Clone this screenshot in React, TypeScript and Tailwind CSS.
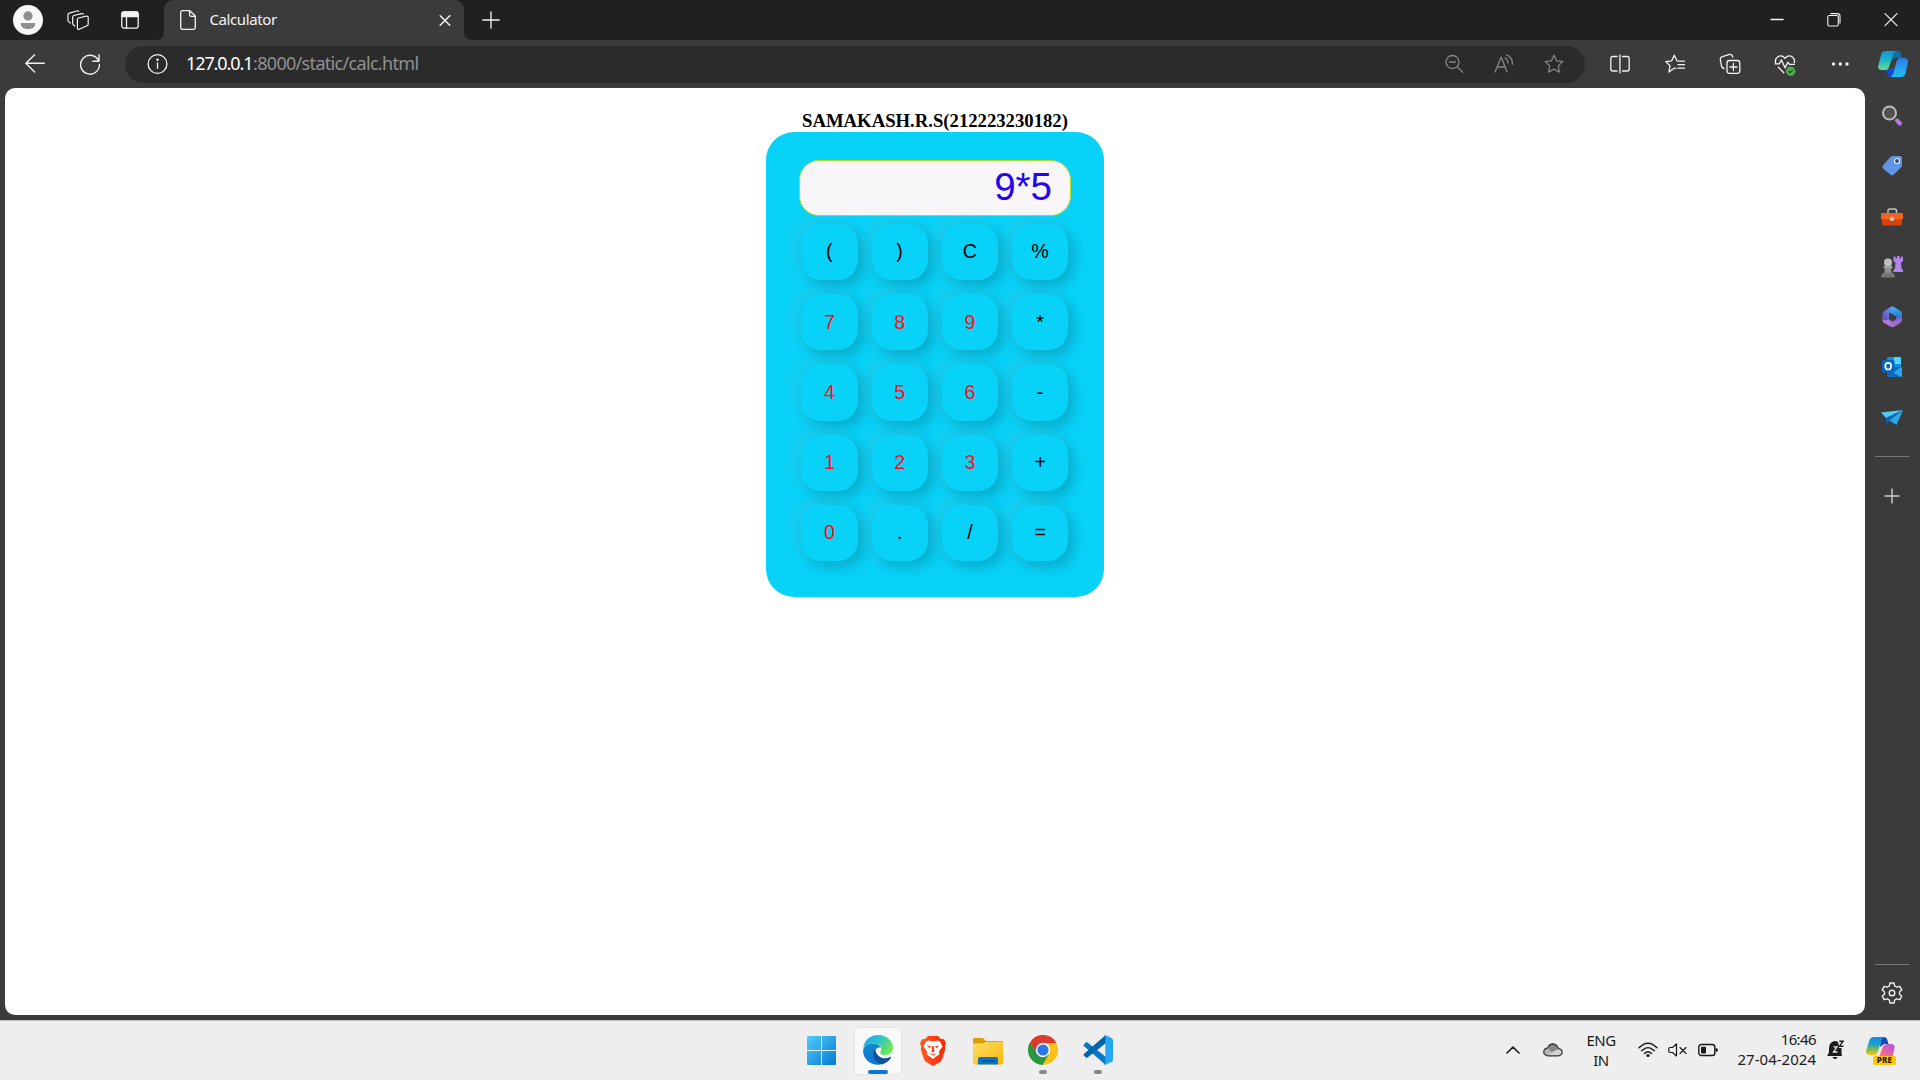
import React from 'react';

type CellProps = { w: string; children?: React.ReactNode };

const Cell = ({ w, children }: CellProps) => (
  <div className={`flex h-full shrink-0 items-center justify-center ${w}`}>{children}</div>
);

type LineProps = {
  w?: number;
  h?: number;
  sw?: number;
  color?: string;
  className?: string;
  children: React.ReactNode;
};

const Line = ({ w = 20, h = 20, sw = 1.3, color = '#f2f2f2', className = '', children }: LineProps) => (
  <svg
    width={w}
    height={h}
    viewBox={`0 0 ${w} ${h}`}
    fill="none"
    stroke={color}
    strokeWidth={sw}
    strokeLinecap="round"
    strokeLinejoin="round"
    className={`shrink-0 ${className}`}
  >
    {children}
  </svg>
);

function TitleBar() {
  return (
    <div className="flex h-10 items-center bg-[#202020]">
      <Cell w="w-[56px]">
        <svg width="30" height="30" viewBox="0 0 30 30">
          <circle cx="15" cy="15" r="15" fill="#f8f8f8" />
          <circle cx="15" cy="10.9" r="4.6" fill="#8f8f8f" />
          <path d="M8 18h14v1.5c0 3-3 4.5-7 4.5s-7-1.5-7-4.5Z" fill="#8f8f8f" />
        </svg>
      </Cell>
      <Cell w="w-[43px]">
        <Line w={22} h={22} sw={1.2}>
          <path d="M11.300 9 19.500 7.200q1.700-.3 1.700 1.300v6.500q0 1.300-1.200 1.800l-7.700 3.500q-1.700.6-1.900-1.100V10.500q0-1.200.9-1.500Z" />
          <path d="M7.800 17 6.300 15.800q-.6-.5-.6-1.300V8q0-1.200 1.200-1.500L14.500 4.600q1.200-.3 1.800.4" />
          <path d="M3.300 14 1.600 12.600Q1 12 1 11.200V5.600q0-1.200 1.200-1.500L9.800 2q1.200-.3 1.800.4" />
        </Line>
      </Cell>
      <Cell w="w-[57px]">
        <Line w={18} h={18} sw={1.3} className="ml-[5px]">
          <rect x=".8" y=".8" width="16.400" height="16.400" rx="2.500" />
          <path d="M1 2.500Q1 1 3 1h12q2 0 2 1.500V5.500H1Z" fill="#f2f2f2" />
          <path d="M5.500 6v11" />
        </Line>
      </Cell>
      <div className="flex h-10 w-[316px] items-end">
        <svg width="8" height="8" viewBox="0 0 8 8">
          <path d="M8 0v8H0Q8 8 8 0Z" fill="#3b3b3b" />
        </svg>
        <div className="flex h-10 w-[300px] items-center rounded-t-[9px] bg-[#3b3b3b] pr-[13px] pl-4">
          <Line w={16} h={20}>
            <path d="M2.500.7h7.300L15.300 6v11.500q0 1.800-1.800 1.800H2.500Q.7 19.300.7 17.500v-15Q.7.7 2.500.7ZM9.600.9v3.800q0 1.600 1.600 1.600h4" />
          </Line>
          <span className="ml-[13.500px] grow pb-[2px] text-[15px] tracking-[-0.400px] text-[#f5f5f5]">Calculator</span>
          <Line w={12} h={12} sw={1.5}>
            <path d="m1.200 1.700 9.600 9.600m0-9.600-9.600 9.600" />
          </Line>
        </div>
        <svg width="8" height="8" viewBox="0 0 8 8">
          <path d="M0 0v8h8Q0 8 0 0Z" fill="#3b3b3b" />
        </svg>
      </div>
      <Cell w="w-[37px]">
        <Line w={18} h={18}>
          <path d="M9 .8v16.400M.8 9h16.400" />
        </Line>
      </Cell>
      <div className="grow" />
      <Cell w="w-[57px]">
        <Line w={14} h={14}>
          <path d="M1 6.500h12" />
        </Line>
      </Cell>
      <Cell w="w-[57px]">
        <Line w={14} h={14} sw={1.1}>
          <rect x=".8" y="2.500" width="10.500" height="10.500" rx="1.500" />
          <path d="M3.800.6h6.500Q13 .6 13 3.300V10" />
        </Line>
      </Cell>
      <Cell w="w-[58px]">
        <Line w={14} h={14} sw={1.2}>
          <path d="m1 .6 12 12M13 .6l-12 12" />
        </Line>
      </Cell>
    </div>
  );
}

const STAR =
  'M10 1.200 12.600 6.800l6.200.8-4.500 4.300 1.100 6.200L10 15.100l-5.400 3 1.100-6.200L1.200 7.600l6.200-.8Z';

function Toolbar() {
  return (
    <div className="flex h-12 items-center bg-[#3b3b3b] pb-1 pt-1">
      <Cell w="w-[70px]">
        <Line w={20} h={20} sw={1.4}>
          <path d="M19.300 9.300H1M9.600.8.900 9.300l8.700 8.600" />
        </Line>
      </Cell>
      <Cell w="w-[40px]">
        <Line w={22} h={22} sw={1.4}>
          <path d="M19.800 8.400A9.400 9.400 0 1 0 20.400 11.500M20 1.800v6.500h-6.200" />
        </Line>
      </Cell>
      <div className="ml-[15px] flex h-[37px] w-[1460px] shrink-0 items-center rounded-full bg-[#2b2b2b]">
        <Cell w="w-[63px]">
          <Line w={22} h={22}>
            <circle cx="11.500" cy="11" r="9.400" />
            <path d="M11.500 9.800v5.500" />
            <circle cx="11.500" cy="6.800" r=".6" fill="#f2f2f2" />
          </Line>
        </Cell>
        <div className="-ml-[2px] flex grow pb-[3px] text-[18px] leading-6">
          <span className="w-[67px] tracking-[-1.100px] text-white">127.0.0.1</span>
          <span className="tracking-[-0.680px] text-[#919191]">:8000/static/calc.html</span>
        </div>
        <Cell w="w-[51px]">
          <Line w={20} h={20} color="#858585">
            <circle cx="8.500" cy="8" r="6.500" />
            <path d="m13.200 12.800 5.500 5.400M5.500 8h6" />
          </Line>
        </Cell>
        <Cell w="w-[50px]">
          <Line w={20} h={20} color="#858585">
            <path d="M1 18 7.200 3 13 18M3 13h8.300M11 4q3 1.500 3 5M12.500.8Q18.500 3 18.500 10.200" />
          </Line>
        </Cell>
        <Cell w="w-[50px]">
          <Line color="#858585">
            <path d={STAR} />
          </Line>
        </Cell>
        <div className="w-[6px]" />
      </div>
      <Cell w="w-[69px]">
        <Line>
          <path d="M7 2.500H2.800q-2 0-2 2v10.500q0 2 2 2H7M12.500 2.500h4.700q2 0 2 2v10.500q0 2-2 2h-4.700M9.900.8v18" />
        </Line>
      </Cell>
      <Cell w="w-[42px]">
        <Line>
          <path d="M11 14.500 9.500 14 4 18l1-6.200L.8 7.600l5.900-.8L9.300 1.200 12 6.800M13 7.200h6.500M13 10.700h6.500M13 14.200h6.500" />
        </Line>
      </Cell>
      <Cell w="w-[68px]">
        <Line w={22} h={22}>
          <rect x="8" y="7.500" width="12.800" height="12.800" rx="2.500" />
          <path d="M14.400 10.500v7m-3.500-3.500h7M5 15.500q-2-.5-2.500-2.500L1.300 6.500q-.3-2 1.500-2.700L10.500 1.400q2.600-.4 3.300 2.600" />
        </Line>
      </Cell>
      <Cell w="w-[42px]">
        <Line w={22} h={22} className="mt-1">
          <path d="M1.600 8Q.8 4 3.500 2q4-2.600 7.500 1.200Q14.500-.6 18.400 2q2.600 2 1.900 5.500M1.200 8.900h4l2.300-4 3.600 8 2.800-5.800 1.500 2.200h5M4.300 12.200l5.500 5.600" />
          <circle cx="16.700" cy="16.300" r="4.700" fill="#4caf50" stroke="none" />
          <path d="m14.700 16.500 1.300 1.300 2.600-2.700" stroke="#24562a" />
        </Line>
      </Cell>
      <Cell w="w-[68px]">
        <svg width="18" height="6" viewBox="0 0 18 6" fill="#f2f2f2">
          <circle cx="2.500" cy="3" r="1.700" />
          <circle cx="9.300" cy="3" r="1.700" />
          <circle cx="16" cy="3" r="1.700" />
        </svg>
      </Cell>
      <Cell w="w-[38px]">
        <svg width="30" height="28" viewBox="0 0 30 28">
          <defs>
            <linearGradient id="cpA" x1="0" y1="0" x2="0" y2="1">
              <stop offset="0" stopColor="#1295d8" />
              <stop offset=".5" stopColor="#20b5c4" />
              <stop offset="1" stopColor="#65dd8c" />
            </linearGradient>
            <linearGradient id="cpB" x1="0" y1="0" x2="0" y2="1">
              <stop offset="0" stopColor="#2c7be5" />
              <stop offset="1" stopColor="#1fc0f5" />
            </linearGradient>
          </defs>
          <path d="M16 1h4q2 0 2.500 2l1.500 5h-6l-5 2Z" fill="#0f6fa8" />
          <path d="M7 19h7l2-4v12h-4q-2 0-3-3Z" fill="#1648d8" />
          <path d="M7.500 1H18q-2 .8-2.700 3l-4.200 13q-.7 3-3.600 3H4Q-.7 20 .3 15.500L3.300 4.300Q4.300 1 7.500 1Z" fill="url(#cpA)" />
          <path d="M22 8h4q4.500 0 4 4.500l-2.500 11q-1 3.500-4.500 3.500H12q2.500-.5 3.300-3.500l3.500-12.800Q19.500 8 22 8Z" fill="url(#cpB)" />
        </svg>
      </Cell>
    </div>
  );
}

const KEYS = ['(', ')', 'C', '%', '7', '8', '9', '*', '4', '5', '6', '-', '1', '2', '3', '+', '0', '.', '/', '='];

function Calculator() {
  return (
    <main className="flex w-[1860px] flex-col items-center rounded-[10px] bg-white pt-[22px]">
      <h1 className="font-['Liberation_Serif',serif] text-[18.700px] leading-[22px] font-bold text-black">
        SAMAKASH.R.S(212223230182)
      </h1>
      <section className="flex h-[465px] w-[338px] flex-col items-center rounded-[28px] bg-[#09d2f8] pt-7 font-['Liberation_Sans',sans-serif]">
        <div className="flex h-14 w-[272px] items-center justify-end rounded-[20px] border border-[#b2dc1e] bg-[#f8f6f8] pr-[18px] pb-[2px] text-[38.500px] text-[#2404f0]">
          9*5
        </div>
        <div className="mt-2 mr-[0.500px] grid grid-cols-4 gap-[14px]">
          {KEYS.map((k) => (
            <button
              key={k}
              className={`flex h-[56.200px] w-[56.250px] items-center justify-center rounded-[20px] bg-[#09d2f8] text-[19.700px] shadow-[6px_6px_14px_rgba(0,0,0,0.18),-6px_-4px_16px_rgba(110,170,180,0.200)] ${/\d/.test(k) ? 'text-[#ff0c14]' : 'text-black'}`}
            >
              {k}
            </button>
          ))}
        </div>
      </section>
    </main>
  );
}

const SideCell = ({ children }: { children: React.ReactNode }) => (
  <div className="flex h-[50.250px] w-full shrink-0 items-center justify-center">{children}</div>
);

function Sidebar() {
  return (
    <aside className="flex w-[54px] flex-col items-center bg-[#3b3b3b] pt-[3px]">
      <SideCell>
        <svg width="22" height="22" viewBox="0 0 22 22">
          <circle cx="8.500" cy="8" r="6.500" fill="#505050" stroke="#bcbcbc" strokeWidth="2" />
          <path d="m16 15.500 3 3" stroke="#b57ce8" strokeWidth="4" strokeLinecap="round" />
        </svg>
      </SideCell>
      <SideCell>
        <svg width="22" height="22" viewBox="0 0 22 22">
          <path d="M12 1h7q2 0 2 2v7q0 1.500-1 2.500l-7.500 7.300q-1.500 1.400-3 0L2 13.500Q.6 12 2 10.500L9.500 2q1-1 2.500-1Z" fill="#6095e6" />
          <circle cx="16" cy="6" r="2.500" fill="#26456f" stroke="#e8f0ff" strokeWidth="1.200" />
        </svg>
      </SideCell>
      <SideCell>
        <svg width="22" height="20" viewBox="0 0 22 20">
          <path d="M7 7V4q0-2 2-2h4.500q2 0 2 2v3" fill="none" stroke="#c4c4c4" strokeWidth="1.500" />
          <rect x="1" y="11" width="20" height="7.500" rx="1" fill="#d6410c" />
          <path d="M0 7q0-1 1-1h20q1 0 1 1v4.500q0 1-1 1H1q-1 0-1-1Z" fill="#f26322" />
          <circle cx="11" cy="12" r="2.200" fill="#c9c4c0" />
        </svg>
      </SideCell>
      <SideCell>
        <svg width="22" height="24" viewBox="0 0 22 24">
          <path d="M12.500 1.500h2v1.800h1.500V1h2.600v2.300H20V1.500h2v4.800l-2 1.200.5 6 1.500 1.300V17h-9.500v-2.200l1.500-1.300.5-6-2-1.200Z" fill="#b385ec" />
          <path d="M4 13h6l.8 5.500H3.200Z" fill="#8e8e8e" />
          <circle cx="7" cy="7.500" r="4" fill="#c0c0c0" />
          <rect x="2.500" y="11" width="9" height="2.500" rx="1.200" fill="#a2a2a2" />
          <path d="M2 18h10q2 1 2 4.500H0Q0 19 2 18Z" fill="#777" />
        </svg>
      </SideCell>
      <SideCell>
        <svg width="22" height="22" viewBox="0 0 22 22">
          <defs>
            <linearGradient id="mA" x1="0" y1="1" x2="1" y2="0">
              <stop offset="0" stopColor="#5145b8" />
              <stop offset="1" stopColor="#8a9af0" />
            </linearGradient>
            <linearGradient id="mB" x1="0" y1="0" x2="0" y2="1">
              <stop offset="0" stopColor="#42b8f2" />
              <stop offset="1" stopColor="#2563c7" />
            </linearGradient>
            <linearGradient id="mC" x1="0" y1="0" x2="1" y2="0">
              <stop offset="0" stopColor="#bd82dd" />
              <stop offset="1" stopColor="#8a62c9" />
            </linearGradient>
          </defs>
          <path d="M11.500.5 13 .8 10.500 4Q8 5.500 8 8.500v5L5.500 16q-4-.5-4-3.500V7.800q0-2 1.700-3L9.500 1Z" fill="url(#mA)" />
          <path d="M11 .5q1.200 0 2.400.7L19.500 5q1.500.9 1.500 2.800v6l-5.500.2-.5-3.500L8.500 6.500q0-3.500 2.500-6Z" fill="url(#mB)" />
          <path d="M1.500 12.500q1.500 2.500 4.500 1.800l2-1 3.500 2.500L17 12l4-.5v2.700q0 1.800-1.500 2.700l-6 3.700q-2 1.200-4 0l-6.200-3.700q-1.800-1.100-1.800-3Z" fill="url(#mC)" />
        </svg>
      </SideCell>
      <SideCell>
        <svg width="22" height="22" viewBox="0 0 22 22">
          <rect x="6" y="1" width="14" height="18" rx="1.500" fill="#1490df" />
          <path d="M13 1h5.500Q20 1 20 2.500V8h-7Z" fill="#50d9ff" />
          <path d="M6 11h15v8.500q0 1.500-1.500 1.500H7.500Q6 21 6 19.500Z" fill="#126abd" />
          <path d="m21 11-9 5.500 8 4.500q1-.3 1-1.500Z" fill="#28a8ea" />
          <rect x="1" y="4" width="12.500" height="12.500" rx="1.500" fill="#0865c1" />
          <ellipse cx="7.200" cy="10.200" rx="2.900" ry="3.300" fill="none" stroke="#fff" strokeWidth="1.700" />
        </svg>
      </SideCell>
      <SideCell>
        <svg width="22" height="18" viewBox="0 0 22 18">
          <path d="M22 1 0 3.500l5 5.500Z" fill="#50cdf5" />
          <path d="M22 1 5 9v6l4-3.300Z" fill="#0d66b5" />
          <path d="M22 1 8.500 11.500 15.500 16Z" fill="#29a8ec" />
        </svg>
      </SideCell>
      <div className="mt-[13.250px] h-px w-[35px] shrink-0 bg-[#747474]" />
      <div className="mt-[14px] w-full">
        <SideCell>
          <Line w={16} h={16} color="#d0d0d0" sw={1.4}>
            <path d="M8 1v14M1 8h14" />
          </Line>
        </SideCell>
      </div>
      <div className="grow" />
      <div className="h-px w-[35px] shrink-0 bg-[#747474]" />
      <div className="flex h-[55px] items-center">
        <Line w={22} h={22} sw={1.400} color="#eeeeee">
          <circle cx="11" cy="11" r="2.800" />
          <path d="M9 1h4l.7 3 2 1.200 3.100-.9 2 3.500-2.300 2.100v2.200l2.300 2.100-2 3.500-3.100-.9-2 1.200L13 21H9l-.7-3-2-1.200-3.100.9-2-3.500 2.300-2.100V9.900L1.200 7.800l2-3.500 3.100.9 2-1.200Z" />
        </Line>
      </div>
    </aside>
  );
}

function EdgeIcon() {
  return (
    <svg width="30" height="30" viewBox="0 0 30 30">
      <defs>
        <linearGradient id="edA" x1="0" y1="0" x2="1" y2=".5">
          <stop offset="0" stopColor="#1b9de2" />
          <stop offset=".5" stopColor="#2bc3d2" />
          <stop offset="1" stopColor="#6de756" />
        </linearGradient>
        <linearGradient id="edB" x1="0" y1="0" x2="0" y2="1">
          <stop offset="0" stopColor="#1688c9" />
          <stop offset="1" stopColor="#0878d4" />
        </linearGradient>
      </defs>
      <path d="M.3 13.500C1 5.500 7 0 15 0c8.500 0 15 5.700 15 12.500 0 4.300-3.500 7.500-8 7.500-4 0-5.500-1.500-4.500-3.200C20 13 17 9 11 8.500 6.500 8 2 9.500.3 13.500Z" fill="url(#edA)" />
      <path d="M.1 15.500C.5 11 5 8.300 10 8.500c3.500.1 6.500 1.500 7.700 4-3.400-.6-6.200 2-6.200 6 0 5 4 9.500 8.500 10.500-9.500 3-20-3.500-19.900-13.500Z" fill="url(#edB)" />
      <path d="M12.200 14.200C8 18.500 10.500 28 19.500 29.200c4-1.200 7-3.800 8.400-6.500.3-.7-.2-1.100-.9-.7-6 3-13.500.5-14.800-7.800Z" fill="#104f9b" />
    </svg>
  );
}

function VsCodeIcon() {
  return (
    <svg width="30" height="30" viewBox="0 0 30 30">
      <path d="m1 9.200 2-1.700q.7-.5 1.500 0L23 22v7.500q-1.300-.1-2-.9L.8 11Q0 10 1 9.200Z" fill="#0879c5" />
      <path d="m1 20.800 2 1.700q.7.500 1.500 0L23 8V.5q-1.300.1-2 .9L.8 19q-.8 1 .2 1.800Z" fill="#0065a9" />
      <path d="M22.500.2 28.600 3q1.400.8 1.400 2.200v19.600q0 1.400-1.400 2.200l-6.100 2.800q-.9.300-1.700-.4 1.500.4 1.500-1.200V1.800Q22.300.2 20.800.6q.8-.7 1.700-.4Z" fill="#26a7f2" />
    </svg>
  );
}

function Taskbar() {
  return (
    <footer className="flex h-[60px] items-center border-t border-[#bcbcbc] bg-[#eeeeee] text-[#1b1b1b]">
      <div className="w-[794px]" />
      <Cell w="w-[55px]">
        <svg width="29" height="29" viewBox="0 0 29 29">
          <defs>
            <linearGradient id="win" x1="0" y1="0" x2="1" y2="1">
              <stop offset="0" stopColor="#50cdfb" />
              <stop offset="1" stopColor="#0878d4" />
            </linearGradient>
          </defs>
          <path d="M1 0h13v14H0V1q0-1 1-1Zm14 0h13q1 0 1 1v13H15ZM0 15h14v14H1q-1 0-1-1Zm15 0h14v13q0 1-1 1H15Z" fill="url(#win)" />
        </svg>
      </Cell>
      <Cell w="w-[57px]">
        <div className="flex h-12 w-12 flex-col items-center justify-end rounded-[5px] border border-[#e4e4e4] bg-[#f9f9f9]">
          <EdgeIcon />
          <div className="mt-[5px] h-1 w-5 rounded-full bg-[#0a78d1]" />
        </div>
      </Cell>
      <Cell w="w-[54px]">
        <svg width="26" height="30" viewBox="0 0 26 30">
          <defs>
            <linearGradient id="brave" x1="0" x2="1">
              <stop offset="0" stopColor="#ff5a22" />
              <stop offset="1" stopColor="#ff2400" />
            </linearGradient>
          </defs>
          <path d="M8 0h10l2.800 3L24 3.200l2 4-1.200 3.300.4 3-3.400 10.200q-.4 1.200-1.500 2L13 30l-7.300-4.300q-1.100-.8-1.500-2L.8 13.500l.4-3L0 7.200l2-4L5.200 3Z" fill="url(#brave)" />
          <path d="m8.500 4.500 4.500 1 4.500-1 2.500 1 2.500 5-3.500 5 .3 3-2.800 1.700L13 23l-3.500-2.800-2.800-1.700.3-3-3.500-5 2.500-5Z" fill="#fff" />
          <path d="m6.500 9.300 4.700 1.200-1.500 1.700Zm13 0-4.700 1.200 1.500 1.700ZM12.300 10h1.400l.8 5.500-1.500 1-1.500-1ZM9.500 16.800l3.500 1.700 3.500-1.700-2.700 2.700h-1.600Z" fill="#fb3b13" />
        </svg>
      </Cell>
      <Cell w="w-[56px]">
        <svg width="30" height="28" viewBox="0 0 30 28">
          <defs>
            <linearGradient id="fold" x1="0" y1="0" x2="1" y2="1">
              <stop offset="0" stopColor="#ffdc65" />
              <stop offset="1" stopColor="#fab80c" />
            </linearGradient>
          </defs>
          <path d="M0 2Q0 1 1 1h8q1 0 1.800.8L13 4h16q1 0 1 1v8H0Z" fill="#dba006" />
          <path d="M0 6.500h9q1 0 2-.8L12.500 5H30v21q0 1.500-1 1.500H1q-1 0-1-1Z" fill="url(#fold)" />
          <path d="M5 27.500V22q0-2 2-2h16q2 0 2 2v5.500Z" fill="#0873c9" />
          <path d="M9 24h13" stroke="#064b86" strokeWidth="1.200" />
        </svg>
      </Cell>
      <Cell w="w-[54px]">
        <div className="flex h-12 flex-col items-center justify-end pb-px">
          <svg width="30" height="30" viewBox="0 0 30 30">
            <circle cx="15" cy="15" r="15" fill="#fbc116" />
            <path d="M15 8h13.300A15 15 0 0 0 2 7.500L8.800 19Z" fill="#df382c" />
            <path d="M2 7.500A15 15 0 0 0 14.500 30L21.300 18.500 15 22q-4 0-6.200-3.500Z" fill="#279847" />
            <circle cx="15" cy="15" r="7.200" fill="#fff" />
            <circle cx="15" cy="15" r="5.600" fill="#2878eb" />
          </svg>
          <div className="mt-[5px] h-1 w-2 rounded-full bg-[#878787]" />
        </div>
      </Cell>
      <Cell w="w-[56px]">
        <div className="flex h-12 flex-col items-center justify-end pb-px">
          <VsCodeIcon />
          <div className="mt-[5px] h-1 w-2 rounded-full bg-[#878787]" />
        </div>
      </Cell>
      <div className="grow" />
      <div className="flex h-full items-center pb-[2px]">
        <Cell w="w-[40px]">
          <Line w={14} h={8} color="#1b1b1b" sw={1.600}>
            <path d="m1 7 6-6 6 6" />
          </Line>
        </Cell>
        <Cell w="w-[40px]">
          <svg width="20" height="14" viewBox="0 0 20 14">
            <path d="M5.500 12.800h10q3.700-.4 3.700-3.700-.2-3-3.700-3.400Q14 1 10 .8 6 .8 4.800 4.800.8 5.400.7 9q.3 3.500 4.800 3.800Z" fill="#b5b5b5" />
            <path d="M5 5Q6 .9 10 .8q4 .1 5.500 4.900L8.500 9Z" fill="#858585" />
            <path d="m4 12.500 11-6 3.500 1 .7 2-1.200 2.500-2.500.8h-10Z" fill="#d2d2d2" />
            <path d="M5.500 12.800h10q3.700-.4 3.700-3.700-.2-3-3.700-3.400Q14 1 10 .8 6 .8 4.800 4.800.8 5.400.7 9q.3 3.500 4.800 3.800Z" fill="none" stroke="#333" strokeWidth="1.200" />
          </svg>
        </Cell>
        <div className="flex w-[56px] flex-col items-center text-[15px] leading-5 tracking-[-0.500px]">
          <span>ENG</span>
          <span>IN</span>
        </div>
        <Cell w="w-[38px]">
          <Line w={20} h={16} color="#1b1b1b" sw={1.400}>
            <path d="M1 5.800q9-9.200 18 0M3.800 8.800q6.200-6.400 12.400 0M6.500 11.500q3.500-3.500 7 0" />
            <circle cx="10" cy="13.500" r="1.600" fill="#1b1b1b" stroke="none" />
          </Line>
        </Cell>
        <Cell w="w-[21px]">
          <Line w={20} h={14} color="#1b1b1b" sw={1.200}>
            <path d="M8.500 1v12L4.500 9.500H2Q.8 9.500.8 8.300V5.700Q.8 4.500 2 4.500h2.500Zm3.500 3.500 6 6m0-6-6 6" />
          </Line>
        </Cell>
        <Cell w="w-[40px]">
          <svg width="20" height="14" viewBox="0 0 20 14">
            <rect x=".8" y="1.500" width="16" height="11" rx="2.500" fill="none" stroke="#1b1b1b" strokeWidth="1.400" />
            <rect x="3" y="3.700" width="5" height="6.700" rx=".8" fill="#1b1b1b" />
            <path d="M17.500 5q2.500 0 2.500 2t-2.500 2Z" fill="#1b1b1b" />
          </svg>
        </Cell>
        <div className="flex w-[88px] flex-col items-end pb-[1px] text-[15px] leading-5 whitespace-nowrap">
          <span className="tracking-[-0.600px]">16:46</span>
          <span className="tracking-[0.020px]">27-04-2024</span>
        </div>
        <Cell w="w-[39px]">
          <svg width="17" height="20" viewBox="0 0 17 20">
            <path d="M8 1Q2 2 2 8v4.500L.5 15v1H15l-.5-2.500V8Q13 1 8 1ZM5.500 17h5q-.5 2-2.500 2t-2.500-2Z" fill="#1b1b1b" />
            <path d="M6.500 6.800H10L6.500 12H10.500" fill="none" stroke="#eee" strokeWidth="1.300" />
            <path d="M11 0h6v8h-5Z" fill="#eee" />
            <path d="M12.300 1.300H16L12.300 6.200H16.500" fill="none" stroke="#1b1b1b" strokeWidth="1.400" />
          </svg>
        </Cell>
      </div>
      <div className="flex h-full w-[65px] items-center pl-[11px]">
        <div className="relative h-[30px] w-[30px]">
          <svg width="30" height="30" viewBox="0 0 30 30">
            <defs>
              <linearGradient id="tpA" x1="0" y1="0" x2="0" y2="1">
                <stop offset="0" stopColor="#1686ef" />
                <stop offset=".4" stopColor="#19a4c7" />
                <stop offset=".7" stopColor="#80bd55" />
                <stop offset="1" stopColor="#ffc70d" />
              </linearGradient>
              <linearGradient id="tpB" x1="1" y1="0" x2="0" y2="1">
                <stop offset="0" stopColor="#a856f0" />
                <stop offset=".55" stopColor="#ed6598" />
                <stop offset="1" stopColor="#ff994d" />
              </linearGradient>
            </defs>
            <path d="M15 1h3q2.500 0 3.200 2.500L22.500 8H18l-4 3Z" fill="#1649bd" />
            <path d="M8 1h10q-2 .8-2.700 3.300l-3.500 12Q11 19 8.500 19H4Q-1 19 .3 14L3.500 4Q4.800 1 8 1Z" fill="url(#tpA)" />
            <path d="M21 8h4q4.500 0 3.400 4.500L26 23H10q2.500-.5 3.300-3L17 10.500Q18 8 21 8Z" fill="url(#tpB)" />
          </svg>
          <span className="absolute top-[20px] left-[7px] flex h-[9px] w-[23px] items-center justify-center rounded-[2px] bg-[#ffc608] text-[8px] leading-none font-extrabold tracking-[0.200px] text-[#201800]">
            PRE
          </span>
        </div>
      </div>
    </footer>
  );
}

export default function App() {
  return (
    <div className="flex h-[1080px] w-[1920px] flex-col overflow-hidden bg-[#3b3b3b] font-['Noto_Sans',sans-serif]">
      <TitleBar />
      <Toolbar />
      <div className="flex h-[932px] pl-[5px]">
        <div className="flex pb-[5px]">
          <Calculator />
        </div>
        <Sidebar />
      </div>
      <Taskbar />
    </div>
  );
}
